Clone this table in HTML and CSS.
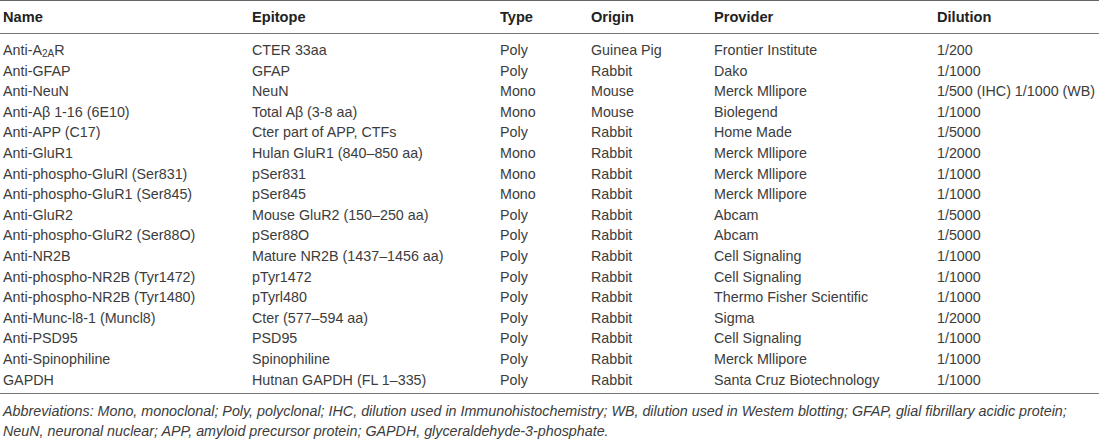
FILE: index.html
```html
<!DOCTYPE html>
<html>
<head>
<meta charset="utf-8">
<link rel="stylesheet" href="styles.css">
</head>
<body>
<table class="tbl">
  <colgroup>
    <col class="c-name"><col class="c-epi"><col class="c-type"><col class="c-orig"><col class="c-prov"><col class="c-dil">
  </colgroup>
  <thead>
    <tr><th>Name</th><th>Epitope</th><th>Type</th><th>Origin</th><th>Provider</th><th>Dilution</th></tr>
  </thead>
  <tbody>
    <tr class="first"><td>Anti-A<sub>2A</sub>R</td><td>CTER 33aa</td><td>Poly</td><td>Guinea Pig</td><td>Frontier Institute</td><td>1/200</td></tr>
    <tr><td>Anti-GFAP</td><td>GFAP</td><td>Poly</td><td>Rabbit</td><td>Dako</td><td>1/1000</td></tr>
    <tr><td>Anti-NeuN</td><td>NeuN</td><td>Mono</td><td>Mouse</td><td>Merck Mllipore</td><td>1/500 (IHC) 1/1000 (WB)</td></tr>
    <tr><td>Anti-Aβ 1-16 (6E10)</td><td>Total Aβ (3-8 aa)</td><td>Mono</td><td>Mouse</td><td>Biolegend</td><td>1/1000</td></tr>
    <tr><td>Anti-APP (C17)</td><td>Cter part of APP, CTFs</td><td>Poly</td><td>Rabbit</td><td>Home Made</td><td>1/5000</td></tr>
    <tr><td>Anti-GluR1</td><td>Hulan GluR1 (840–850 aa)</td><td>Mono</td><td>Rabbit</td><td>Merck Mllipore</td><td>1/2000</td></tr>
    <tr><td>Anti-phospho-GluRl (Ser831)</td><td>pSer831</td><td>Mono</td><td>Rabbit</td><td>Merck Mllipore</td><td>1/1000</td></tr>
    <tr><td>Anti-phospho-GluR1 (Ser845)</td><td>pSer845</td><td>Mono</td><td>Rabbit</td><td>Merck Mllipore</td><td>1/1000</td></tr>
    <tr><td>Anti-GluR2</td><td>Mouse GluR2 (150–250 aa)</td><td>Poly</td><td>Rabbit</td><td>Abcam</td><td>1/5000</td></tr>
    <tr><td>Anti-phospho-GluR2 (Ser88O)</td><td>pSer88O</td><td>Poly</td><td>Rabbit</td><td>Abcam</td><td>1/5000</td></tr>
    <tr><td>Anti-NR2B</td><td>Mature NR2B (1437–1456 aa)</td><td>Poly</td><td>Rabbit</td><td>Cell Signaling</td><td>1/1000</td></tr>
    <tr><td>Anti-phospho-NR2B (Tyr1472)</td><td>pTyr1472</td><td>Poly</td><td>Rabbit</td><td>Cell Signaling</td><td>1/1000</td></tr>
    <tr><td>Anti-phospho-NR2B (Tyr1480)</td><td>pTyrl480</td><td>Poly</td><td>Rabbit</td><td>Thermo Fisher Scientific</td><td>1/1000</td></tr>
    <tr><td>Anti-Munc-l8-1 (Muncl8)</td><td>Cter (577–594 aa)</td><td>Poly</td><td>Rabbit</td><td>Sigma</td><td>1/2000</td></tr>
    <tr><td>Anti-PSD95</td><td>PSD95</td><td>Poly</td><td>Rabbit</td><td>Cell Signaling</td><td>1/1000</td></tr>
    <tr><td>Anti-Spinophiline</td><td>Spinophiline</td><td>Poly</td><td>Rabbit</td><td>Merck Mllipore</td><td>1/1000</td></tr>
    <tr class="last"><td>GAPDH</td><td>Hutnan GAPDH (FL 1–335)</td><td>Poly</td><td>Rabbit</td><td>Santa Cruz Biotechnology</td><td>1/1000</td></tr>
  </tbody>
</table>
<p class="foot">Abbreviations: Mono, monoclonal; Poly, polyclonal; IHC, dilution used in Immunohistochemistry; WB, dilution used in Westem blotting; GFAP, glial fibrillary acidic protein; NeuN, neuronal nuclear; APP, amyloid precursor protein; GAPDH, glyceraldehyde-3-phosphate.</p>
</body>
</html>
```
FILE: styles.css
```css
body {
  margin: 0;
  background: #fff;
  font-family: "Liberation Sans", Arial, sans-serif;
  font-size: 14.3px;
  color: #3c3c3c;
}
.tbl {
  width: 1099px;
  border-collapse: collapse;
  table-layout: fixed;
  border-top: 1px solid #666;
  border-bottom: 1px solid #777;
}
.c-name { width: 252px; }
.c-epi { width: 248px; }
.c-type { width: 91px; }
.c-orig { width: 123px; }
.c-prov { width: 223px; }
.c-dil { width: 162px; }
.tbl th {
  text-align: left;
  font-weight: bold;
  font-size: 14.6px;
  color: #222;
  height: 32px;
  padding: 0 0 0 3px;
  border-bottom: 1px solid #777;
  vertical-align: middle;
}
.tbl th + th { padding-left: 0; }
.tbl td {
  padding: 0 0 0 3px;
  line-height: 20.6px;
  height: 20.6px;
  white-space: nowrap;
  vertical-align: middle;
}
.tbl td + td { padding-left: 0; }
.tbl tr.first td { padding-top: 6px; }
.tbl tr.last td { padding-bottom: 3px; }
sub {
  font-size: 10px;
  vertical-align: -2px;
  line-height: 0;
}
.foot {
  margin: 7px 0 0 3px;
  font-style: italic;
  line-height: 20px;
  color: #3c3c3c;
  width: 1097px;
}
```
